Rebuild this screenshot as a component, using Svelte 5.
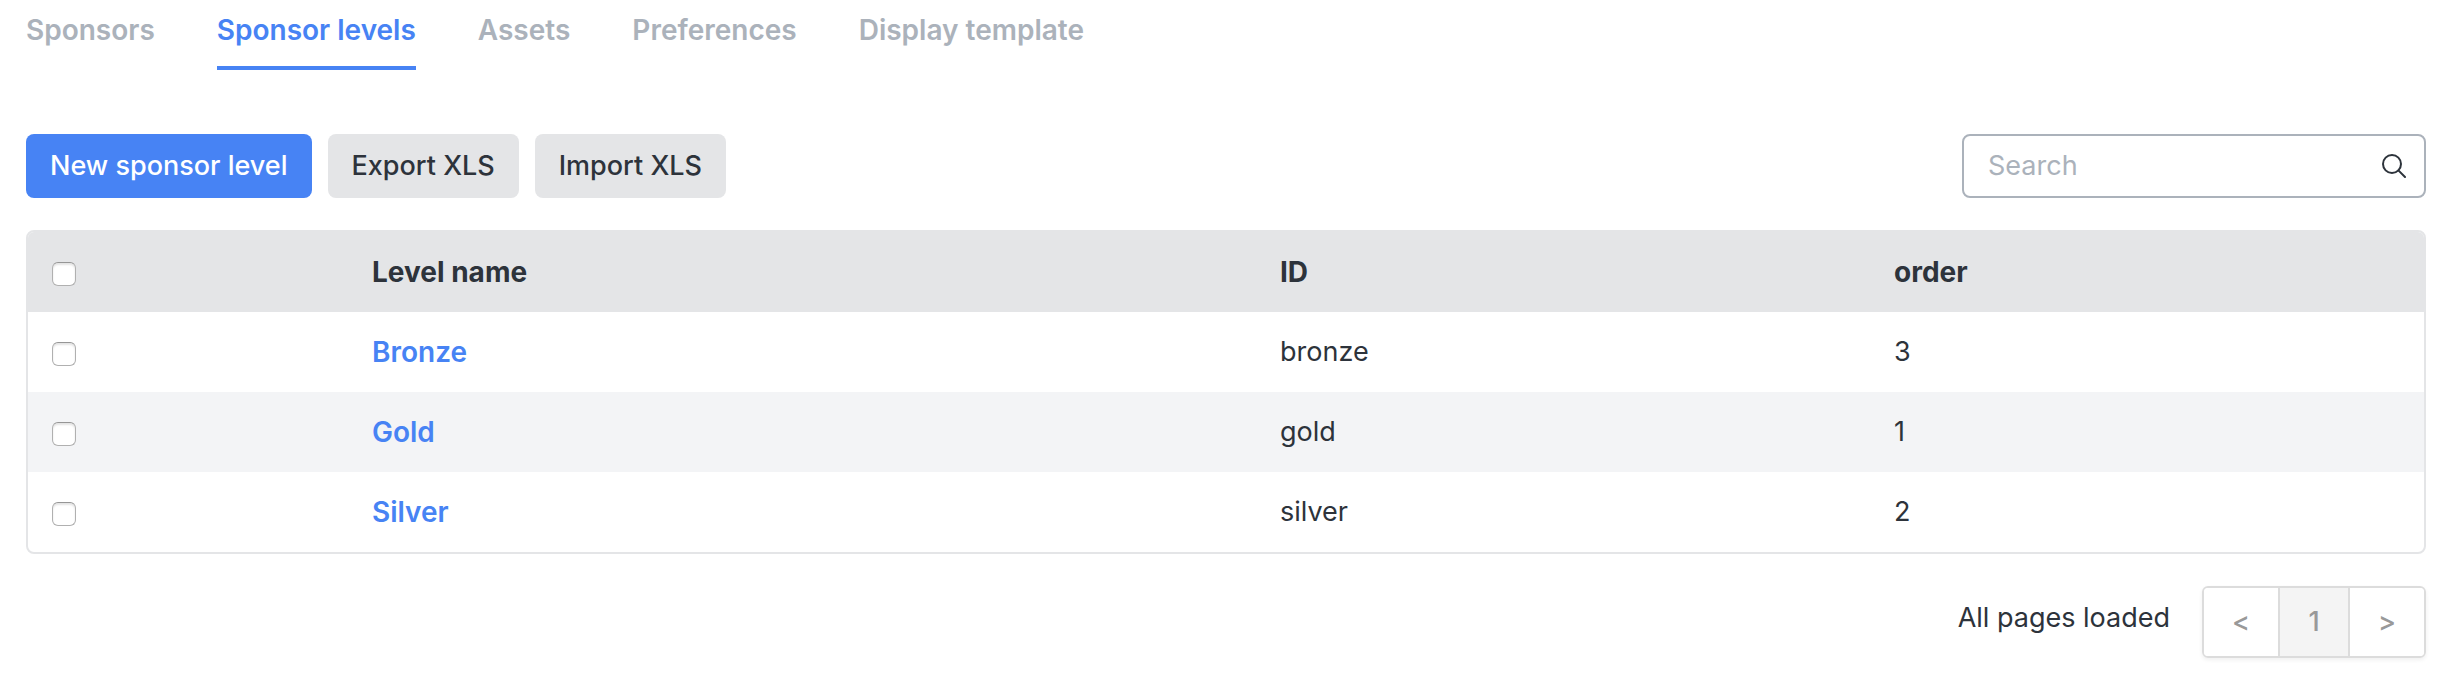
<script>
    let tabs = ["Sponsors", "Sponsor levels", "Assets", "Preferences", "Display template"];
    let activeTab = "Sponsor levels";
    let search = "";
    let selected = [];

    let levels = [
        { name: "Bronze", id: "bronze", order: 3 },
        { name: "Gold", id: "gold", order: 1 },
        { name: "Silver", id: "silver", order: 2 }
    ];

    $: visibleLevels = levels.filter((level) => {
        return level.name.toLowerCase().includes(search.toLowerCase());
    });
    $: allSelected = selected.length === levels.length;

    function toggleAll() {
        selected = allSelected ? [] : levels.map((level) => level.id);
    }
</script>

<div class="page">
    <nav class="tabs">
        {#each tabs as tab}
            <a
                href={"#" + tab.toLowerCase().replace(" ", "-")}
                class:active={tab === activeTab}
                on:click={() => {
                    activeTab = tab;
                }}>{tab}</a
            >
        {/each}
    </nav>

    <div class="toolbar">
        <div class="toolbarBtns">
            <button class="btn primary">New sponsor level</button>
            <button class="btn">Export XLS</button>
            <button class="btn">Import XLS</button>
        </div>
        <div class="search">
            <input bind:value={search} type="text" placeholder="Search" aria-label="Search">
            <svg viewBox="0 0 24 24" width="24" height="24" aria-hidden="true">
                <circle cx="10" cy="10" r="9" />
                <path d="M16.4 16.4 L23 23" />
            </svg>
        </div>
    </div>

    <div class="tableContainer">
        <table>
            <colgroup>
                <col class="colCheck">
                <col class="colName">
                <col class="colId">
                <col class="colOrder">
            </colgroup>
            <thead>
                <tr>
                    <th><input type="checkbox" aria-label="Select all" checked={allSelected} on:change={toggleAll}></th>
                    <th>Level name</th>
                    <th>ID</th>
                    <th>order</th>
                </tr>
            </thead>
            <tbody>
                {#each visibleLevels as level (level.id)}
                    <tr>
                        <td><input type="checkbox" aria-label={"Select " + level.name} value={level.id} bind:group={selected}></td>
                        <td><a href={"#" + level.id}>{level.name}</a></td>
                        <td>{level.id}</td>
                        <td>{level.order}</td>
                    </tr>
                {/each}
            </tbody>
        </table>
    </div>

    <div class="footer">
        <p>All pages loaded</p>
        <div class="pagination">
            <button aria-label="Previous page">&lt;</button>
            <button class="current">1</button>
            <button aria-label="Next page">&gt;</button>
        </div>
    </div>
</div>

<style>
    :global(body) {
        margin: 0;
        background: #fff;
    }

    .page {
        padding: 0 30px 16px 26px;
        color: #2d333b;
        font-family: Inter, "Liberation Sans", sans-serif;
        font-size: 27px;
        line-height: 40px;
    }

    a {
        text-decoration: none;
    }

    .tabs {
        display: flex;
        gap: 62px;
        margin-bottom: 64px;
    }

    .tabs a {
        padding: 10px 0 16px;
        border-bottom: 4px solid transparent;
        color: #abb2bb;
        font-size: 28px;
        font-weight: 600;
    }

    .tabs a.active {
        color: #4783f4;
        border-color: #4783f4;
    }

    .toolbar {
        display: flex;
        align-items: center;
        justify-content: space-between;
        margin-bottom: 32px;
    }

    .toolbarBtns {
        display: flex;
        gap: 16px;
    }

    .btn {
        height: 64px;
        padding: 0 24px;
        border: none;
        border-radius: 8px;
        background: #e4e5e7;
        color: inherit;
        font: inherit;
        font-weight: 500;
        cursor: pointer;
    }

    .btn.primary {
        background: #4783f4;
        color: white;
    }

    .search {
        display: flex;
        align-items: center;
        box-sizing: border-box;
        width: 464px;
        height: 64px;
        padding: 0 18px 0 24px;
        border: 2px solid #abb2bb;
        border-radius: 8px;
    }

    .search input {
        flex: 1;
        min-width: 0;
        padding: 0;
        border: none;
        outline: none;
        background: transparent;
        color: inherit;
        font: inherit;
    }

    .search input::placeholder {
        color: #abb2bb;
        opacity: 1;
    }

    .search svg {
        fill: none;
        stroke: #2d333b;
        stroke-width: 2;
        stroke-linecap: round;
    }

    .tableContainer {
        border: 2px solid #e4e5e7;
        border-radius: 8px;
        overflow: hidden;
    }

    table {
        width: 100%;
        table-layout: fixed;
        border-collapse: collapse;
    }

    .colCheck {
        width: 320px;
    }

    .colName {
        width: 908px;
    }

    .colId {
        width: 614px;
    }

    .colOrder {
        width: 554px;
    }

    th,
    td {
        height: 80px;
        padding: 0 24px;
        text-align: left;
        vertical-align: middle;
    }

    th {
        background: #e4e5e7;
        font-size: 28px;
        font-weight: 700;
    }

    tbody tr:nth-child(even) {
        background: #f3f4f6;
    }

    td a {
        color: #4783f4;
        font-size: 28px;
        font-weight: 600;
    }

    input[type="checkbox"] {
        appearance: none;
        display: block;
        width: 24px;
        height: 24px;
        margin: 4px 0 0;
        border: 1px solid #b0b0b0;
        border-top-color: #969696;
        border-radius: 6px;
        background: white;
        box-shadow: inset 0 2px 2px #e4e4e4;
    }

    input[type="checkbox"]:checked {
        background: #4783f4;
        box-shadow: none;
    }

    .footer {
        display: flex;
        align-items: center;
        justify-content: flex-end;
        gap: 32px;
        margin-top: 32px;
    }

    .footer p {
        margin: 0 0 8px;
    }

    .pagination {
        display: flex;
        box-sizing: border-box;
        height: 72px;
        border: 2px solid #dcdcdc;
        border-radius: 6px;
        overflow: hidden;
        box-shadow: 0 2px 4px #f0f0f0;
    }

    .pagination button {
        width: 74px;
        padding: 0;
        border: none;
        background: white;
        color: #999;
        font: inherit;
        font-weight: 500;
        cursor: pointer;
    }

    .pagination .current {
        width: 72px;
        border: solid #dcdcdc;
        border-width: 0 2px;
        background: #f4f4f4;
    }
</style>
